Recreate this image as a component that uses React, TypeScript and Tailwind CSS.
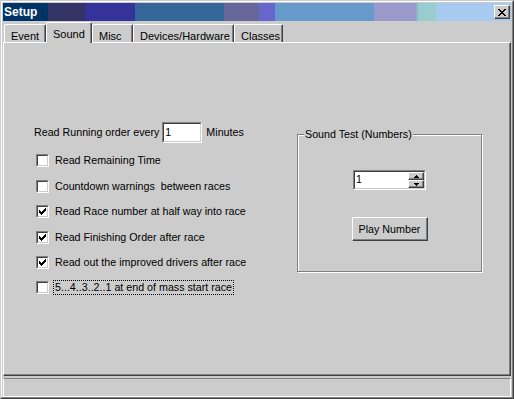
import React from 'react';

const Check = () => (
  <svg width="7" height="7" viewBox="0 0 7 7" shapeRendering="crispEdges" className="block">
    {[2, 3, 4, 3, 2, 1, 0].map((y, x) => (
      <rect key={x} x={x} y={y} width="1" height="3" fill="#000" />
    ))}
  </svg>
);

function Checkbox({ checked }: { checked?: boolean }) {
  return (
    <span className="box-border flex h-[13px] w-[13px] shrink-0 border border-t-[#808080] border-l-[#808080] border-r-white border-b-white">
      <span className="box-border flex flex-1 items-center justify-center border border-t-[#404040] border-l-[#404040] border-r-[#cccccc] border-b-[#cccccc] bg-white">
        {checked && <Check />}
      </span>
    </span>
  );
}

function Sunken({ className, children }: { className: string; children: React.ReactNode }) {
  return (
    <div className={`box-border flex border border-t-[#808080] border-l-[#808080] border-r-white border-b-white ${className}`}>
      <div className="box-border flex flex-1 border border-t-[#404040] border-l-[#404040] border-r-[#cccccc] border-b-[#cccccc] bg-white">
        {children}
      </div>
    </div>
  );
}

const Arrow = ({ up }: { up?: boolean }) => (
  <svg width="5" height="3" viewBox="0 0 5 3" shapeRendering="crispEdges" className="block">
    {up ? (
      <>
        <rect x="2" y="0" width="1" height="1" fill="#000" />
        <rect x="1" y="1" width="3" height="1" fill="#000" />
        <rect x="0" y="2" width="5" height="1" fill="#000" />
      </>
    ) : (
      <>
        <rect x="0" y="0" width="5" height="1" fill="#000" />
        <rect x="1" y="1" width="3" height="1" fill="#000" />
        <rect x="2" y="2" width="1" height="1" fill="#000" />
      </>
    )}
  </svg>
);

const SpinHalf = ({ up }: { up?: boolean }) => (
  <div className="box-border flex h-[8px] w-[16px] items-center justify-center border border-t-white border-l-white border-r-[#404040] border-b-[#404040] bg-[#cccccc] shadow-[inset_-1px_-1px_0_#808080]">
    <Arrow up={up} />
  </div>
);

const tabs = [
  { label: 'Event', w: 'w-[42px]' },
  { label: 'Sound', w: 'w-[46px]', active: true },
  { label: 'Misc', w: 'w-[41px]' },
  { label: 'Devices/Hardware', w: 'w-[101px]' },
  { label: 'Classes', w: 'w-[49px]' },
];

const options = [
  { label: 'Read Remaining Time', mt: 'mt-[10px]' },
  { label: 'Countdown warnings  between races', mt: 'mt-[11px]' },
  { label: 'Read Race number at half way into race', mt: 'mt-[10px]', checked: true },
  { label: 'Read Finishing Order after race', mt: 'mt-[11px]', checked: true },
  { label: 'Read out the improved drivers after race', mt: 'mt-[10px]', checked: true },
  { label: '5...4..3..2..1 at end of mass start race', mt: 'mt-[10px]', focus: true },
];

export default function App() {
  return (
    <div className="box-border h-[399px] w-[514px] overflow-hidden border border-t-[#cccccc] border-l-[#cccccc] border-r-[#404040] border-b-[#404040] bg-[#cccccc] font-['Liberation_Sans',Arial,sans-serif] text-[10.7px] text-black">
      <div className="box-border h-full border border-t-white border-l-white border-r-[#808080] border-b-[#808080] px-[1px] pt-[1px]">
        {/* title bar */}
        <div className="flex h-[18px] items-center justify-between bg-[linear-gradient(to_right,#003366_0px,#003366_45px,#333366_45px,#333366_82px,#333399_82px,#333399_132px,#336699_132px,#336699_221px,#666699_221px,#666699_256px,#6666cc_256px,#6666cc_272px,#6699cc_272px,#6699cc_371px,#9999cc_371px,#9999cc_413px,#8fb3cf_413px,#8fb3cf_415px,#99cccc_415px,#99cccc_433px,#a6caf0_433px)] pl-[1px] pr-[1px]">
          <span className="text-[12px] font-bold leading-none text-white">Setup</span>
          <div className="box-border flex h-[14px] w-[16px] items-center justify-center border border-t-white border-l-white border-r-[#404040] border-b-[#404040] bg-[#cccccc] shadow-[inset_-1px_-1px_0_#808080]">
            <svg width="8" height="7" viewBox="0 0 8 7" shapeRendering="crispEdges" className="block">
              {[0, 1, 2, 3, 4, 5, 6].map((i) => (
                <React.Fragment key={i}>
                  <rect x={i} y={i} width="2" height="1" fill="#000" />
                  <rect x={6 - i} y={i} width="2" height="1" fill="#000" />
                </React.Fragment>
              ))}
            </svg>
          </div>
        </div>

        {/* tabs */}
        <div className="mt-[1px] flex h-[20px] items-start pl-[1px] text-[11px]">
          {tabs.map((t) =>
            t.active ? (
              <div
                key={t.label}
                className={`relative z-10 box-border flex h-[21px] ${t.w} items-start rounded-t-[2px] border-l border-t border-r border-l-white border-t-white border-r-[#404040] bg-[#cccccc] pl-[6px] pt-[3px] shadow-[inset_-1px_0_0_#808080]`}
              >
                {t.label}
              </div>
            ) : (
              <div
                key={t.label}
                className={`mt-[2px] box-border flex h-[18px] ${t.w} items-start rounded-t-[2px] border-l border-t border-r border-l-white border-t-white border-r-[#404040] pl-[6px] pt-[3px] shadow-[inset_-1px_0_0_#808080]`}
              >
                {t.label}
              </div>
            )
          )}
        </div>

        {/* tab page */}
        <div className="box-border flex h-[334px] items-start border border-t-white border-l-white border-r-[#404040] border-b-[#404040] pl-[30px] pt-[79px] shadow-[inset_-1px_-1px_0_#808080]">
          <div className="flex w-[263px] flex-col">
            <div className="flex items-center">
              <span>Read Running order every</span>
              <Sunken className="ml-[3px] h-[21px] w-[40px]">
                <span className="pl-[1px] pt-[2px] leading-[13px]">1</span>
              </Sunken>
              <span className="ml-[4px]">Minutes</span>
            </div>
            {options.map((o) => (
              <div key={o.label} className={`flex items-center gap-[4px] pl-[2px] ${o.mt}`}>
                <Checkbox checked={o.checked} />
                <span
                  className={`whitespace-pre border px-[1px] leading-[13px] ${o.focus ? 'border-dotted border-black' : 'border-transparent'}`}
                >
                  {o.label}
                </span>
              </div>
            ))}
          </div>

          <div className="relative mt-[12px] box-border h-[138px] w-[185px] border border-[#808080] shadow-[inset_1px_1px_0_white,1px_1px_0_white]">
            <span className="absolute -top-[8px] left-[6px] bg-[#cccccc] px-[1px] leading-[14px]">Sound Test (Numbers)</span>
            <div className="flex flex-col items-center pt-[35px]">
              <Sunken className="h-[20px] w-[73px]">
                <span className="flex-1 pl-[1px] pt-[1px] leading-[13px]">1</span>
                <div className="flex flex-col">
                  <SpinHalf up />
                  <SpinHalf />
                </div>
              </Sunken>
              <button className="mt-[27px] box-border flex h-[24px] w-[76px] items-center justify-center border border-t-white border-l-white border-r-[#404040] border-b-[#404040] bg-[#cccccc] shadow-[inset_-1px_-1px_0_#808080]">
                Play Number
              </button>
            </div>
          </div>
        </div>

        {/* status bar */}
        <div className="mt-[2px] box-border h-[19px] border border-t-[#808080] border-l-white border-r-white border-b-white" />
      </div>
    </div>
  );
}
